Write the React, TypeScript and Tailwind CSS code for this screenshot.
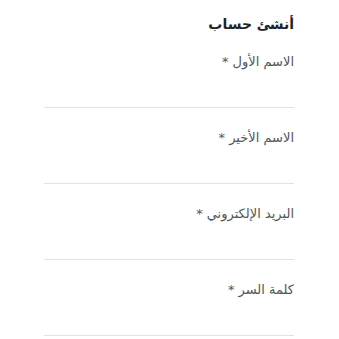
import React from "react";

const fields = ["الاسم الأول *", "الاسم الأخير *", "البريد الإلكتروني *", "كلمة السر *"];

export default function App() {
  return (
    <div dir="rtl" className="w-[339px] h-[339px] bg-white overflow-hidden" style={{ fontFamily: '"DejaVu Sans", "Noto Sans", sans-serif' }}>
      <div className="mr-[45px] ml-[44px] pt-[14px]">
        <h1 className="text-[14px] leading-[20px] font-bold text-[#222]">أنشئ حساب</h1>
        <div className="flex flex-col mt-[18px]">
          {fields.map((f, i) => (
            <div key={i} className={i === 0 ? "" : "mt-[20px]"}>
              <label className="block text-[13px] leading-[20px] text-[#555]">{f}</label>
              <div className="h-[36px] border-b border-[#e2e2e2]"></div>
            </div>
          ))}
        </div>
      </div>
    </div>
  );
}
